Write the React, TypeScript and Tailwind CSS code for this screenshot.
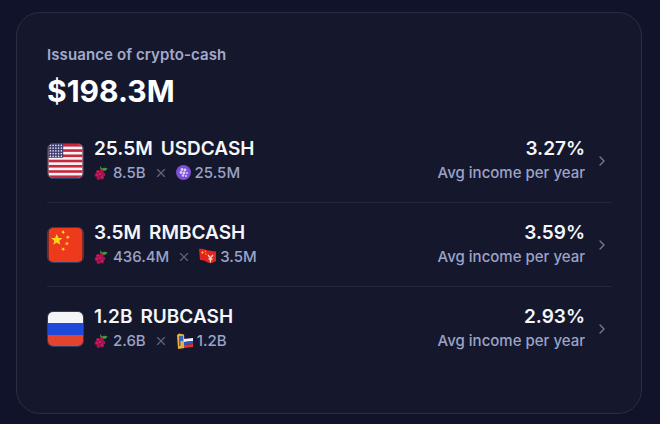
import { ChevronRight, X } from "lucide-react";
import type { ReactNode } from "react";

function Raspberry() {
  return (
    <svg width="14" height="16" viewBox="0 0 14 16" className="shrink-0">
      <path d="M7.5 5 C8 3 10 2 13.5 3.5 C12.5 5.5 10.5 6.5 8 5.5 Z" fill="#3f9a3c" />
      <path d="M6.5 5 L6 1 L8.5 4 Z" fill="#3f9a3c" />
      <g fill="#ad1150">
        <circle cx="4" cy="7" r="2" />
        <circle cx="7.5" cy="6.5" r="2" />
        <circle cx="2.6" cy="10" r="2" />
        <circle cx="6" cy="9.5" r="2" />
        <circle cx="9.3" cy="9.5" r="2" />
        <circle cx="4.5" cy="13" r="2" />
        <circle cx="8" cy="12.5" r="2" />
      </g>
      <circle cx="6" cy="9" r="0.7" fill="#e0417e" />
      <circle cx="3" cy="10" r="0.7" fill="#e0417e" />
      <circle cx="8" cy="12" r="0.7" fill="#e0417e" />
      <circle cx="4" cy="6.5" r="0.7" fill="#e0417e" />
    </svg>
  );
}

function PurpleCoin() {
  return (
    <svg width="15" height="15" viewBox="0 0 15 15" className="shrink-0">
      <circle cx="7.5" cy="7.5" r="7.5" fill="#7c4fd6" />
      <g fill="#d9ccf7">
        <circle cx="6" cy="4.5" r="1.4" />
        <circle cx="9" cy="5" r="1.4" />
        <circle cx="5" cy="7.5" r="1.4" />
        <circle cx="8" cy="8" r="1.4" />
        <circle cx="11" cy="8" r="1" />
        <circle cx="7" cy="10.5" r="1.2" />
        <circle cx="10" cy="11" r="1" />
      </g>
    </svg>
  );
}

function ChinaCoin() {
  return (
    <svg width="17" height="17" viewBox="0 0 17 17" className="shrink-0">
      <path d="M0 1 C4 0 8 3 17 3.5 L17 13 C13 16 8 15 6 13 C4 12 2 12 1 12 Z" fill="#e3231c" />
      <path d="M3.5 3 L4.8 4.5 L3.5 6 L2.2 4.5 Z" fill="#f5c518" />
      <circle cx="6.5" cy="3.5" r="0.7" fill="#f5c518" />
      <circle cx="7" cy="6" r="0.7" fill="#f5c518" />
      <path d="M9 7 L11.5 10 L14 7 M11.5 10 L11.5 14.5 M9.5 11 L13.5 11" stroke="#f4d8cf" strokeWidth="1.3" fill="none" />
    </svg>
  );
}

function RussiaCoin() {
  return (
    <svg width="17" height="17" viewBox="0 0 17 17" className="shrink-0">
      <path d="M1 2 L3 0.5 L8 1.5 L9 15 L2 16 Z" fill="#e6b040" />
      <path d="M3 3 L7 3 L7 8 L4.5 8 L4.5 13 L3 13 Z" fill="#3b63c4" />
      <path d="M8 6 L17 5 L17 8 L8 9 Z" fill="#f4f4f4" />
      <path d="M8 9 L17 8 L17 11 L8 12 Z" fill="#2a55c8" />
      <path d="M8 12 L17 11 L17 14 L8 15 Z" fill="#dd3232" />
    </svg>
  );
}

function FlagUS() {
  const stripes = [0, 1, 2, 3, 4, 5, 6, 7, 8, 9, 10, 11, 12];
  return (
    <svg viewBox="0 0 37 37" className="h-full w-full">
      <rect width="37" height="37" fill="#f4f4f6" />
      {stripes.filter((s) => s % 2 === 0).map((s) => (
        <rect key={s} y={s * 2.85} width="37" height="2.85" fill="#c8283e" />
      ))}
      <rect width="16" height="15" fill="#3c3b6e" />
      {[2, 5, 8, 11, 14].map((y) =>
        [2, 5, 8, 11, 14].map((x) => <circle key={`${x}-${y}`} cx={x} cy={y - 0.5} r="0.9" fill="#dfe0ea" />),
      )}
    </svg>
  );
}

function FlagCN() {
  const star = "M0,-1 L0.29,-0.31 L0.95,-0.31 L0.43,0.12 L0.59,0.81 L0,0.42 L-0.59,0.81 L-0.43,0.12 L-0.95,-0.31 L-0.29,-0.31 Z";
  return (
    <svg viewBox="0 0 37 37" className="h-full w-full">
      <rect width="37" height="37" fill="#ee3a1c" />
      <path d={star} transform="translate(9 13) scale(6.5)" fill="#fbd31f" />
      <path d={star} transform="translate(16 4.5) rotate(20) scale(2.4)" fill="#fbd31f" />
      <path d={star} transform="translate(21 10) rotate(40) scale(2.4)" fill="#fbd31f" />
      <path d={star} transform="translate(20 17) rotate(10) scale(2.4)" fill="#fbd31f" />
      <path d={star} transform="translate(16 23) rotate(30) scale(2.4)" fill="#fbd31f" />
    </svg>
  );
}

function FlagRU() {
  return (
    <div className="flex h-full w-full flex-col">
      <div className="h-1/3 bg-[#f5f5f7]" />
      <div className="h-1/3 bg-[#1f49d8]" />
      <div className="h-1/3 bg-[#e4432f]" />
    </div>
  );
}

type Row = {
  flag: ReactNode;
  amount: string;
  name: string;
  left: string;
  coin: ReactNode;
  right: string;
  pct: string;
};

const rows: Row[] = [
  { flag: <FlagUS />, amount: "25.5M", name: "USDCASH", left: "8.5B", coin: <PurpleCoin />, right: "25.5M", pct: "3.27%" },
  { flag: <FlagCN />, amount: "3.5M", name: "RMBCASH", left: "436.4M", coin: <ChinaCoin />, right: "3.5M", pct: "3.59%" },
  { flag: <FlagRU />, amount: "1.2B", name: "RUBCASH", left: "2.6B", coin: <RussiaCoin />, right: "1.2B", pct: "2.93%" },
];

export default function App() {
  return (
    <div className="h-[424px] w-[660px] bg-[#10132a] pl-4 pt-3 font-['Inter',sans-serif]">
      <div className="h-[402px] w-[626px] rounded-3xl border border-[#2a2d45] bg-[#15182d] pl-[30px] pr-[29px] pt-[32px]">
        <p className="text-[15px] leading-5 font-semibold tracking-[0.1px] text-[#a3aacb]">Issuance of crypto-cash</p>
        <p className="mt-[8px] text-3xl leading-9 font-bold text-white">$198.3M</p>
        <div className="mt-[10px]">
          {rows.map((row, i) => (
            <div key={row.name} className={`flex h-[84px] items-center ${i < 2 ? "border-b border-[#23263d]" : ""}`}>
              <div className="h-9 w-[37px] shrink-0 overflow-hidden rounded-md border border-[#2c3f66]">{row.flag}</div>
              <div className="ml-2.5 flex-1">
                <div className="flex gap-2 text-[19px] leading-6 font-semibold text-[#f5f6fa]">
                  <span>{row.amount}</span>
                  <span>{row.name}</span>
                </div>
                <div className="flex items-center text-[15px] leading-6 font-medium text-[#9ba3c7]">
                  <Raspberry />
                  <span className="ml-[5px]">{row.left}</span>
                  <X size={14} className="mx-2 text-[#5f6482]" />
                  {row.coin}
                  <span className="ml-1">{row.right}</span>
                </div>
              </div>
              <div className="text-right">
                <p className="text-[19px] leading-6 font-semibold text-[#f5f6fa]">{row.pct}</p>
                <p className="text-[15px] leading-6 font-medium text-[#9ba3c7]">Avg income per year</p>
              </div>
              <ChevronRight size={16} className="ml-[9px] mr-[2px] text-[#73799b]" />
            </div>
          ))}
        </div>
      </div>
    </div>
  );
}
